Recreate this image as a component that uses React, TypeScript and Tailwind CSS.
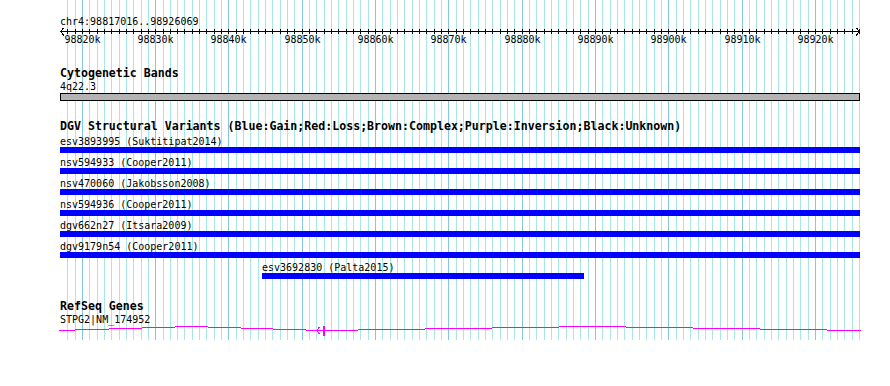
import React from "react";

const START = 98817016;
const SCALE = 0.00733;
const px = (bp: number) => Math.round(60 + (bp - START) * SCALE);

const grid: { x: number; major: boolean; k: number }[] = [];
for (let k = 98818; k <= 98926; k++) {
  grid.push({ x: px(k * 1000), major: k % 10 === 0, k });
}

const rows = [
  { label: "esv3893995 (Suktitipat2014)", x: 60, w: 800 },
  { label: "nsv594933 (Cooper2011)", x: 60, w: 800 },
  { label: "nsv470060 (Jakobsson2008)", x: 60, w: 800 },
  { label: "nsv594936 (Cooper2011)", x: 60, w: 800 },
  { label: "dgv662n27 (Itsara2009)", x: 60, w: 800 },
  { label: "dgv9179n54 (Cooper2011)", x: 60, w: 800 },
  { label: "esv3692830 (Palta2015)", x: 262, w: 322 },
];

const geneSegs: [number, number, number][] = [
  [59, 75, 330],
  [75, 109, 329],
  [109, 142, 328],
  [142, 175, 327],
  [175, 208, 326],
  [208, 241, 327],
  [241, 273, 328],
  [273, 306, 329],
  [306, 358, 330],
  [358, 425, 329],
  [425, 492, 328],
  [492, 559, 327],
  [559, 626, 326],
  [626, 693, 327],
  [693, 760, 328],
  [760, 827, 329],
  [827, 861, 330],
];

export default function App() {
  return (
    <div className="relative w-[890px] h-[386px] bg-white overflow-hidden text-black font-['DejaVu_Sans_Mono',monospace]">
      <svg className="absolute left-0 top-0" width={890} height={340} shapeRendering="crispEdges">
        {grid.map((g) => (
          <rect key={g.k} x={g.x} y={0} width={1} height={340} fill={g.major ? "#84c6e6" : "#a8e6e8"} />
        ))}
      </svg>
      <div className="relative pt-[15px]">
        <div className="ml-[60px] h-[13px] text-[10px] leading-[13px] whitespace-nowrap">chr4:98817016..98926069</div>
        <svg className="block" width={890} height={18} shapeRendering="crispEdges">
          <rect x={60} y={3} width={800} height={1} fill="#000" />
          {grid.map((g) => (
            <rect key={g.k} x={g.x} y={1} width={1} height={5} fill="#000" />
          ))}
          <polyline points="64,-0.5 60.5,3.5 64,7.5" fill="none" stroke="#000" strokeWidth={1} />
          <polyline points="856,-0.5 859.5,3.5 856,7.5" fill="none" stroke="#000" strokeWidth={1} />
          {grid
            .filter((g) => g.major)
            .map((g) => (
              <text
                key={g.k}
                x={g.x + 0.5}
                y={15}
                textAnchor="middle"
                fontSize={10}
                fontFamily="'DejaVu Sans Mono', monospace"
                fill="#000"
              >
                {`${g.k}k`}
              </text>
            ))}
        </svg>
        <div className="ml-[60px] mt-[21px] h-[13px] text-[11.6px] leading-[13px] font-bold whitespace-nowrap">Cytogenetic Bands</div>
        <div className="ml-[60px] h-[13px] text-[10px] leading-[13px] whitespace-nowrap">4q22.3</div>
        <div className="ml-[60px] w-[800px] h-[8px] border border-black bg-[#b4b4b4]" />
        <div className="ml-[60px] mt-[19px] h-[13px] text-[11.6px] leading-[13px] font-bold whitespace-nowrap">
          DGV Structural Variants (Blue:Gain;Red:Loss;Brown:Complex;Purple:Inversion;Black:Unknown)
        </div>
        <div className="mt-[2px] flex flex-col">
          {rows.map((r, i) => (
            <div key={i} className="flex flex-col mb-[3px]" style={{ marginLeft: r.x }}>
              <div className="h-[12px] text-[10px] leading-[13px] whitespace-nowrap">{r.label}</div>
              <div className="h-[6px] bg-[#0000ff]" style={{ width: r.w }} />
            </div>
          ))}
        </div>
        <div className="ml-[60px] mt-[18px] h-[13px] text-[11.6px] leading-[13px] font-bold whitespace-nowrap">RefSeq Genes</div>
        <div className="ml-[60px] h-[13px] text-[10px] leading-[13px] whitespace-nowrap">STPG2|NM_174952</div>
        <svg className="block -mt-[2px]" width={890} height={14} shapeRendering="crispEdges">
          {geneSegs.map(([a, b, y], i) => (
            <rect key={i} x={a} y={y - 324} width={b - a} height={1} fill="#ff00ff" />
          ))}
          <polyline points="319.5,3 316.5,6.5 319.5,10" fill="none" stroke="#ff00ff" strokeWidth={1} />
          <rect x={323} y={2} width={2} height={10} fill="#ff00ff" />
        </svg>
      </div>
    </div>
  );
}
